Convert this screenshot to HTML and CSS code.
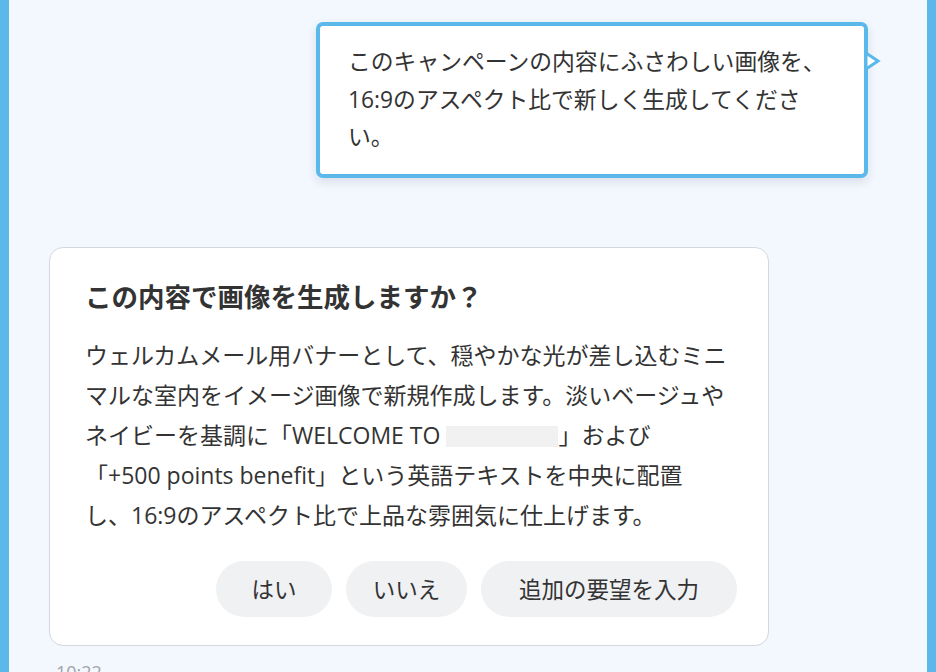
FILE: index.html
```html
<!DOCTYPE html>
<html lang="ja">
<head>
<meta charset="utf-8">
<title>Chat</title>
<link rel="stylesheet" href="styles.css">
</head>
<body>
<div class="frame">
  <main class="chat">
    <div class="row-user">
      <div class="bubble">
        <p class="bubble-text">このキャンペーンの内容にふさわしい画像を、<br>16:9のアスペクト比で新しく生成してくださ<br>い。</p>
        <svg class="tail" width="16" height="20" viewBox="0 0 16 20"><polygon points="1,2 13,10 1,18" fill="#ffffff" stroke="#5ab9ea" stroke-width="3" stroke-linejoin="miter"/></svg>
      </div>
    </div>
    <section class="card">
      <h2 class="card-title">この内容で画像を生成しますか？</h2>
      <p class="card-body">ウェルカムメール用バナーとして、穏やかな光が差し込むミニマルな室内をイメージ画像で新規作成します。淡いベージュやネイビーを基調に「WELCOME TO <span class="redact"></span>」および<br>「+500 points benefit」という英語テキストを中央に配置<br>し、16:9のアスペクト比で上品な雰囲気に仕上げます。</p>
      <div class="actions">
        <button class="pill pill-yes">はい</button>
        <button class="pill pill-no">いいえ</button>
        <button class="pill pill-more">追加の要望を入力</button>
      </div>
    </section>
    <div class="time">10:22</div>
  </main>
</div>
</body>
</html>
```
FILE: styles.css
```css
* { box-sizing: border-box; }
html, body { margin: 0; padding: 0; }
body {
  width: 936px;
  height: 672px;
  overflow: hidden;
  background: #f3f7fe;
  font-family: "Open Sans", "Noto Sans CJK JP", sans-serif;
  color: #333333;
}
.frame {
  height: 672px;
  border-left: 9px solid #5ab9ea;
  border-right: 9px solid #5ab9ea;
  background: #f3f7fe;
}
.chat {
  padding: 22px 0 0 40px;
  display: flex;
  flex-direction: column;
}
.row-user {
  display: flex;
  justify-content: flex-end;
  padding-right: 59px;
}
.bubble {
  position: relative;
  width: 552px;
  background: #ffffff;
  border: 4px solid #5ab9ea;
  border-radius: 7px;
  padding: 17px 20px 18px 28px;
  box-shadow: 0 4px 10px rgba(60, 80, 110, 0.14);
}
.bubble-text {
  margin: 0;
  font-size: 22.8px;
  line-height: 37.5px;
  color: #333333;
}
.tail {
  position: absolute;
  right: -17px;
  top: 25px;
}
.card {
  margin-top: 69px;
  width: 720px;
  background: #ffffff;
  border: 1px solid #d3d7de;
  border-radius: 14px;
  padding: 31px 31px 28px 35px;
}
.card-title {
  margin: 0;
  font-size: 26.5px;
  line-height: 36px;
  font-weight: 700;
  color: #333333;
}
.card-body {
  margin: 20px 0 0 0;
  font-size: 23px;
  line-height: 40px;
  color: #333333;
}
.redact {
  display: inline-block;
  width: 112px;
  height: 21px;
  background: #f1f1f1;
  vertical-align: -3px;
}
.actions {
  margin-top: 26px;
  display: flex;
  justify-content: flex-end;
  gap: 14px;
}
.pill {
  height: 56px;
  padding: 0;
  border: none;
  border-radius: 28px;
  background: #f0f1f3;
  font-family: inherit;
  font-size: 22.5px;
  color: #333333;
}
.pill-yes { width: 116px; }
.pill-no { width: 121px; }
.pill-more { width: 256px; }
.time {
  margin-top: 14px;
  margin-left: 7px;
  font-size: 18px;
  color: #a0a4aa;
}
```
